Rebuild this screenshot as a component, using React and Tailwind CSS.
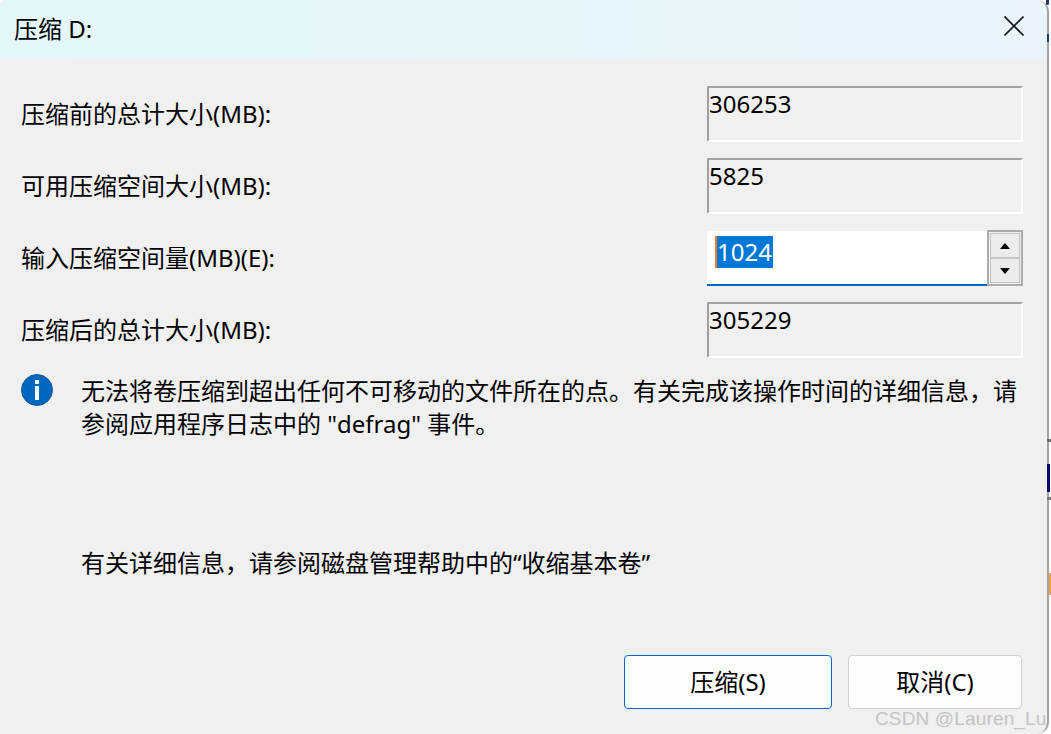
const labelFont = "font-['Noto_Sans','Noto_Sans_CJK_SC',sans-serif]";

const ReadonlyField = ({ value }) => (
  <div className="w-[316px] h-[56px] border-2 border-t-[#a0a0a0] border-l-[#a0a0a0] border-r-white border-b-white bg-[#f0f0f0] text-[24px] leading-[32px] text-black">
    {value}
  </div>
);

const Row = ({ label, children }) => (
  <div className="flex items-center justify-between pr-[24px]">
    <span className="text-[24px] text-black">{label}</span>
    {children}
  </div>
);

const Spinner = () => (
  <div className="w-[36px] h-[56px] border-2 border-[#ababab] p-[1px] flex flex-col bg-[#f0f0f0]">
    <div className="flex-1 flex items-center justify-center border border-[#c4c4c4] bg-[#ececec]">
      <svg width="10" height="6" viewBox="0 0 10 6"><path d="M5 0L10 6H0z" fill="#000" /></svg>
    </div>
    <div className="flex-1 flex items-center justify-center border border-[#c4c4c4] bg-[#ececec]">
      <svg width="10" height="6" viewBox="0 0 10 6"><path d="M0 0H10L5 6z" fill="#000" /></svg>
    </div>
  </div>
);

export default function App() {
  return (
    <div className={`w-[1051px] h-[734px] overflow-hidden bg-white relative ${labelFont}`}>
      <div className="w-[1049px] h-[734px] flex flex-col bg-[#f0f0f0] border-r-[2px] border-[#a3a3a3] rounded-tr-[12px] rounded-br-[12px] rounded-tl-[6px] overflow-hidden">
        <div className="h-[58px] shrink-0 flex items-center justify-between pl-[14px] pr-[23px] bg-gradient-to-r from-[#e4f7f8] to-[#e9f5fb]">
          <span className="text-[24px] text-black">压缩 D:</span>
          <svg width="20" height="20" viewBox="0 0 20 20" className="mt-[-6px]">
            <path d="M0.5 0.5L19.5 19.5M19.5 0.5L0.5 19.5" stroke="#1a1a1a" strokeWidth="1.6" fill="none" />
          </svg>
        </div>

        <div className="flex-1 flex flex-col pl-[21px] pt-[28px]">
          <div className="flex flex-col gap-[16px]">
            <Row label="压缩前的总计大小(MB):">
              <ReadonlyField value="306253" />
            </Row>
            <Row label="可用压缩空间大小(MB):">
              <ReadonlyField value="5825" />
            </Row>
            <Row label="输入压缩空间量(MB)(E):">
              <div className="w-[316px] h-[56px] flex">
                <div className="flex-1 mt-[1px] bg-white border-b-2 border-[#0067c0] pl-[8px] pt-[5px]">
                  <span className="inline-block h-[32px] leading-[32px] text-[24px] text-white bg-[#0078d7] border-l-2 border-[#f57c20] pr-[1px]">
                    1024
                  </span>
                </div>
                <Spinner />
              </div>
            </Row>
            <Row label="压缩后的总计大小(MB):">
              <ReadonlyField value="305229" />
            </Row>
          </div>

          <div className="flex mt-[16px] gap-[28px]">
            <svg width="32" height="32" viewBox="0 0 32 32" className="shrink-0">
              <circle cx="16" cy="16" r="15.5" fill="#0067c0" stroke="#1d5a96" />
              <rect x="14" y="6" width="4" height="4" fill="#fff" />
              <rect x="14" y="12" width="4" height="14" fill="#fff" />
            </svg>
            <p className="text-[24px] leading-[33px] text-black whitespace-nowrap">
              无法将卷压缩到超出任何不可移动的文件所在的点。有关完成该操作时间的详细信息，请
              <br />
              参阅应用程序日志中的 "defrag" 事件。
            </p>
          </div>

          <p className="ml-[60px] mt-[106px] text-[24px] leading-[33px] text-black">
            有关详细信息，请参阅磁盘管理帮助中的“收缩基本卷”
          </p>

          <div className="flex justify-end gap-[16px] pr-[25px] mt-[76px]">
            <button className="w-[208px] h-[54px] bg-[#fdfdfd] border border-[#0067c0] rounded-[4px] text-[24px] text-black">
              压缩(S)
            </button>
            <button className="w-[174px] h-[54px] bg-[#fdfdfd] border border-[#d0d0d0] rounded-[4px] text-[24px] text-black">
              取消(C)
            </button>
          </div>
        </div>
      </div>

      {/* bits of the desktop behind the dialog, on the right edge */}
      <div className="absolute left-[1046px] top-0 w-[3px] h-[5px] bg-[#1c3a6e] rounded-b-full" />
      <div className="absolute left-[1047px] top-[34px] w-[2px] h-[8px] bg-[#1c3a6e]" />
      <div className="absolute left-[1047px] top-[439px] w-[4px] h-[3px] bg-[#6e6e6e]" />
      <div className="absolute left-[1047px] top-[464px] w-[3px] h-[28px] bg-[#0d0d6b]" />
      <div className="absolute left-[1047px] top-[497px] w-[4px] h-[3px] bg-[#7a7a7a]" />
      <div className="absolute left-[1049px] top-[573px] w-[2px] h-[22px] bg-[#e8a34e]" />

      <span className="absolute left-[875px] top-[705px] text-[19px] tracking-[0.15px] text-[#c4c4c4] font-['Liberation_Sans',sans-serif] whitespace-nowrap">
        CSDN @Lauren_Lu
      </span>
    </div>
  );
}
